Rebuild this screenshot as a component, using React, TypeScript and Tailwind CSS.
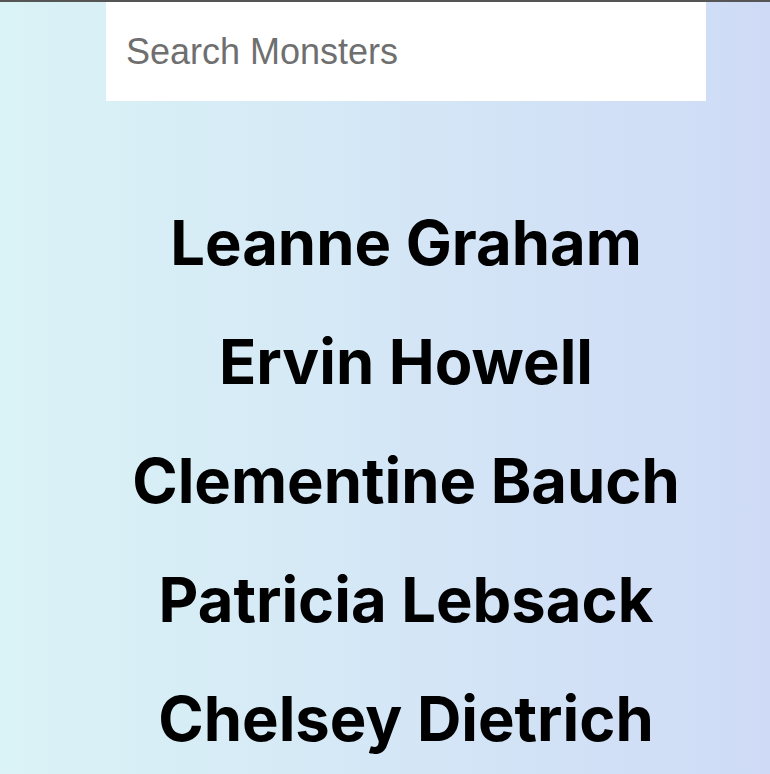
const monsters = [
  'Leanne Graham',
  'Ervin Howell',
  'Clementine Bauch',
  'Patricia Lebsack',
  'Chelsey Dietrich',
];

export default function App() {
  return (
    <div className="h-[774px] overflow-hidden border-t-2 border-[#555555] bg-gradient-to-r from-[#daf3f6] to-[#cfdbf6]">
      <div className="flex flex-col items-center pl-[42px]">
        <input
          type="search"
          placeholder="Search Monsters"
          className="w-[600px] h-[99px] bg-white px-5 text-[36px] text-black placeholder:text-[#6f6f6f] outline-none"
          style={{ fontFamily: '"Liberation Sans", Arial, sans-serif' }}
        />
        <div className="flex flex-col items-center pt-[104px] gap-[44px]">
          {monsters.map((name) => (
            <h2
              key={name}
              className="text-[61.5px] leading-[75px] font-bold text-black"
              style={{ fontFamily: 'Inter, sans-serif' }}
            >
              {name}
            </h2>
          ))}
        </div>
      </div>
    </div>
  );
}
